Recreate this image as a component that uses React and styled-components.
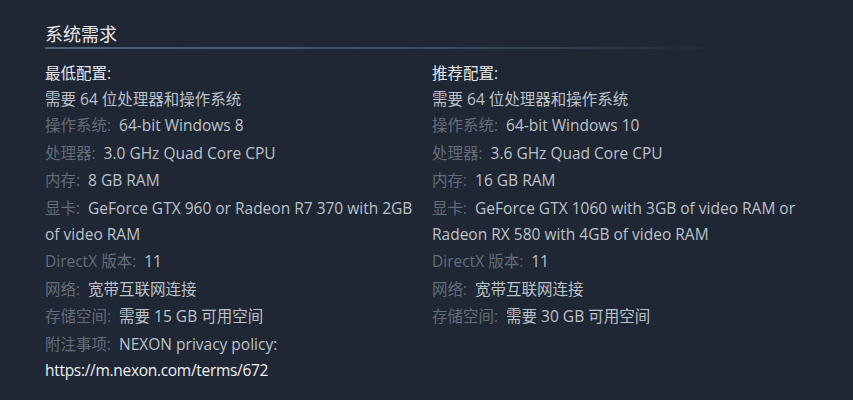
import React from 'react';
import styled, { createGlobalStyle } from 'styled-components';

const GlobalStyle = createGlobalStyle`
  html, body {
    margin: 0;
    padding: 0;
    background: #1f2634;
  }
  body {
    font-family: "Open Sans", "Noto Sans CJK SC", sans-serif;
  }
`;

const Page = styled.div`
  width: 853px;
  height: 400px;
  box-sizing: border-box;
  padding: 21px 0 0 45px;
  background: #1f2634;
  overflow: hidden;
`;

const Section = styled.div`
  width: 680px;
`;

const Heading = styled.h2`
  margin: 0;
  font-size: 18px;
  font-weight: 400;
  line-height: 24px;
  color: #e8ebee;
  padding-bottom: 2px;
  font-family: "Noto Sans CJK SC", sans-serif;
`;

const Divider = styled.div`
  height: 2px;
  background: linear-gradient(to right, #4d637a 0%, #41566c 40%, #2f3d4f 80%, rgba(47, 61, 79, 0) 100%);
  margin-bottom: 11px;
`;

const Columns = styled.div`
  display: grid;
  grid-template-columns: 387px 387px;
`;

const Column = styled.div`
  width: 372px;
  font-size: 15.5px;
  line-height: 26px;
  color: #bcc2c8;
`;

const ColTitle = styled.div`
  color: #e3e6e9;
`;

const List = styled.ul`
  list-style: none;
  margin: 0;
  padding: 0;
`;

const Item = styled.li`
  margin-bottom: 1.5px;
`;

const Label = styled.span`
  color: #646d79;
  margin-right: 8px;
`;

const Note = styled.div`
  color: #bcc2c8;
`;

const Url = styled.span`
  color: #eef1f3;
  letter-spacing: -0.3px;
`;

const minimum = [
  ['操作系统:', '64-bit Windows 8'],
  ['处理器:', '3.0 GHz Quad Core CPU'],
  ['内存:', '8 GB RAM'],
  ['显卡:', 'GeForce GTX 960 or Radeon R7 370 with 2GB of video RAM'],
  ['DirectX 版本:', '11'],
  ['网络:', '宽带互联网连接'],
  ['存储空间:', '需要 15 GB 可用空间'],
];

const recommended = [
  ['操作系统:', '64-bit Windows 10'],
  ['处理器:', '3.6 GHz Quad Core CPU'],
  ['内存:', '16 GB RAM'],
  ['显卡:', 'GeForce GTX 1060 with 3GB of video RAM or Radeon RX 580 with 4GB of video RAM'],
  ['DirectX 版本:', '11'],
  ['网络:', '宽带互联网连接'],
  ['存储空间:', '需要 30 GB 可用空间'],
];

const Spec = ({ title, rows, notes }) => (
  <Column>
    <ColTitle>{title}</ColTitle>
    <Note>需要 64 位处理器和操作系统</Note>
    <List>
      {rows.map(([label, value]) => (
        <Item key={label}>
          <Label>{label}</Label>
          {value}
        </Item>
      ))}
      {notes && (
        <Item>
          <Label>附注事项:</Label>
          NEXON privacy policy: <Url>https://m.nexon.com/terms/672</Url>
        </Item>
      )}
    </List>
  </Column>
);

const App = () => (
  <>
    <GlobalStyle />
    <Page>
      <Section>
        <Heading>系统需求</Heading>
        <Divider />
        <Columns>
          <Spec title="最低配置:" rows={minimum} notes />
          <Spec title="推荐配置:" rows={recommended} />
        </Columns>
      </Section>
    </Page>
  </>
);

export default App;
